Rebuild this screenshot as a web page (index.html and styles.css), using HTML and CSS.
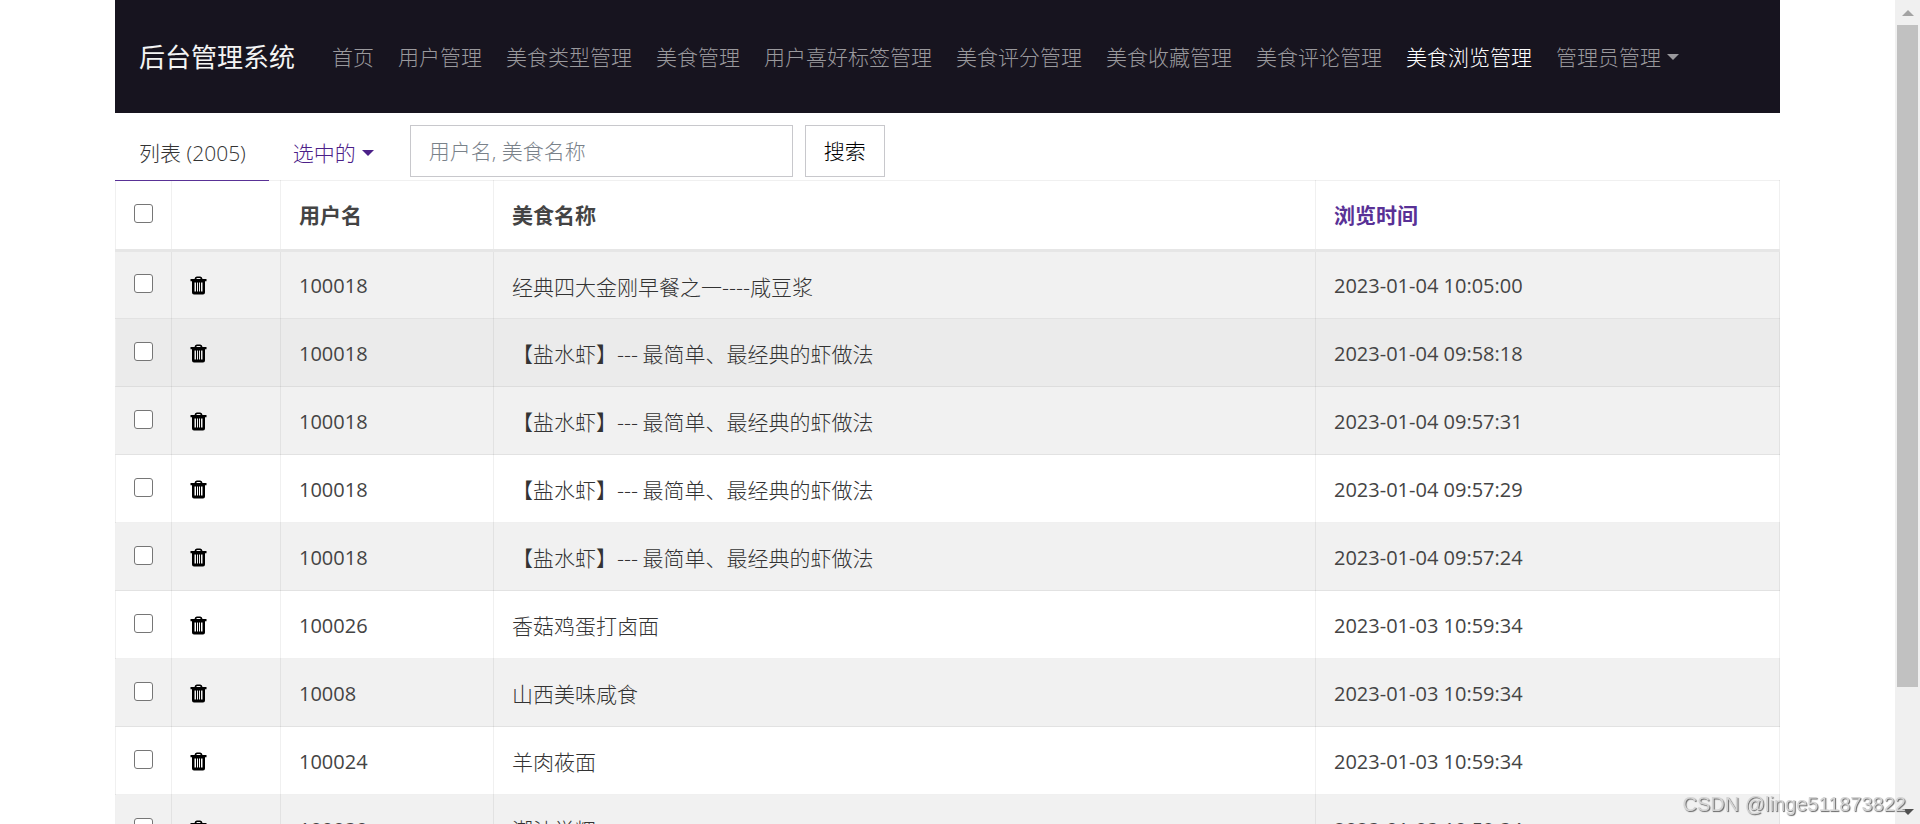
FILE: index.html
```html
<!DOCTYPE html>
<html lang="zh-CN">
<head>
<meta charset="utf-8">
<title>美食浏览管理 - 后台管理系统</title>
<link rel="stylesheet" href="styles.css">
</head>
<body>
<svg class="sprite" aria-hidden="true">
  <symbol id="trash" viewBox="0 0 17 19">
    <path fill-rule="evenodd" d="M4.500 3Q4.800.5 6.800.5H10.200Q12.200.5 12.500 3H16.500V5.200H15V16.500Q15 18.500 13 18.500H4Q2 18.500 2 16.500V5.200H.5V3ZM6.300 3H10.700Q10.500 2 9.800 2H7.200Q6.500 2 6.300 3ZM4.500 6.500V15.500H6V6.500ZM7 6.500V15.500H8V6.500ZM9 6.500V15.500H10V6.500ZM11 6.500V15.500H12.500V6.500Z"/>
  </symbol>
</svg>
<div class="page">
  <nav class="navbar">
    <a class="brand" href="#">后台管理系统</a>
    <a class="nav-link" href="#">首页</a>
    <a class="nav-link" href="#">用户管理</a>
    <a class="nav-link" href="#">美食类型管理</a>
    <a class="nav-link" href="#">美食管理</a>
    <a class="nav-link" href="#">用户喜好标签管理</a>
    <a class="nav-link" href="#">美食评分管理</a>
    <a class="nav-link" href="#">美食收藏管理</a>
    <a class="nav-link" href="#">美食评论管理</a>
    <a class="nav-link active" href="#">美食浏览管理</a>
    <a class="nav-link caret" href="#">管理员管理</a>
  </nav>
  <div class="toolbar">
    <a class="tab current" href="#">列表 (2005)</a>
    <a class="tab caret" href="#">选中的</a>
    <form class="search">
      <input class="search-box" type="text" placeholder="用户名, 美食名称" aria-label="用户名, 美食名称">
      <button class="search-button" type="button">搜索</button>
    </form>
  </div>
  <table class="list">
    <colgroup><col class="col-check"><col class="col-action"><col class="col-user"><col><col class="col-time"></colgroup>
    <thead>
      <tr><th><input class="check" type="checkbox" aria-label="全选"></th><th></th><th>用户名</th><th>美食名称</th><th><a class="sort" href="#">浏览时间</a></th></tr>
    </thead>
    <tbody>
      <tr><td><input class="check" type="checkbox" aria-label="选择"></td><td><a class="delete" href="#" aria-label="删除"><svg class="icon"><use href="#trash"/></svg></a></td><td class="num">100018</td><td class="name">经典四大金刚早餐之一----咸豆浆</td><td class="num">2023-01-04 10:05:00</td></tr>
      <tr class="hover"><td><input class="check" type="checkbox" aria-label="选择"></td><td><a class="delete" href="#" aria-label="删除"><svg class="icon"><use href="#trash"/></svg></a></td><td class="num">100018</td><td class="name">【盐水虾】--- 最简单、最经典的虾做法</td><td class="num">2023-01-04 09:58:18</td></tr>
      <tr><td><input class="check" type="checkbox" aria-label="选择"></td><td><a class="delete" href="#" aria-label="删除"><svg class="icon"><use href="#trash"/></svg></a></td><td class="num">100018</td><td class="name">【盐水虾】--- 最简单、最经典的虾做法</td><td class="num">2023-01-04 09:57:31</td></tr>
      <tr><td><input class="check" type="checkbox" aria-label="选择"></td><td><a class="delete" href="#" aria-label="删除"><svg class="icon"><use href="#trash"/></svg></a></td><td class="num">100018</td><td class="name">【盐水虾】--- 最简单、最经典的虾做法</td><td class="num">2023-01-04 09:57:29</td></tr>
      <tr><td><input class="check" type="checkbox" aria-label="选择"></td><td><a class="delete" href="#" aria-label="删除"><svg class="icon"><use href="#trash"/></svg></a></td><td class="num">100018</td><td class="name">【盐水虾】--- 最简单、最经典的虾做法</td><td class="num">2023-01-04 09:57:24</td></tr>
      <tr><td><input class="check" type="checkbox" aria-label="选择"></td><td><a class="delete" href="#" aria-label="删除"><svg class="icon"><use href="#trash"/></svg></a></td><td class="num">100026</td><td class="name">香菇鸡蛋打卤面</td><td class="num">2023-01-03 10:59:34</td></tr>
      <tr><td><input class="check" type="checkbox" aria-label="选择"></td><td><a class="delete" href="#" aria-label="删除"><svg class="icon"><use href="#trash"/></svg></a></td><td class="num">10008</td><td class="name">山西美味咸食</td><td class="num">2023-01-03 10:59:34</td></tr>
      <tr><td><input class="check" type="checkbox" aria-label="选择"></td><td><a class="delete" href="#" aria-label="删除"><svg class="icon"><use href="#trash"/></svg></a></td><td class="num">100024</td><td class="name">羊肉莜面</td><td class="num">2023-01-03 10:59:34</td></tr>
      <tr><td><input class="check" type="checkbox" aria-label="选择"></td><td><a class="delete" href="#" aria-label="删除"><svg class="icon"><use href="#trash"/></svg></a></td><td class="num">100030</td><td class="name">潮汕鲎粿</td><td class="num">2023-01-03 10:59:34</td></tr>
    </tbody>
  </table>
</div>
<div class="scrollbar" aria-hidden="true">
  <span class="arrow up"></span>
  <span class="track"><span class="thumb"></span></span>
  <span class="arrow down"></span>
</div>
<div class="watermark">CSDN @linge511873822</div>
</body>
</html>
```

FILE: styles.css
```css
* { box-sizing: border-box; }
body {
  margin: 0;
  height: 100vh;
  overflow: hidden;
  display: grid;
  grid-template-columns: minmax(0, 1fr) 25px;
  background: #fff;
  color: #333;
  font: 300 21px/32px "Open Sans", "Noto Sans CJK SC", sans-serif;
}
a { color: #593196; text-decoration: none; }
.sprite { position: absolute; width: 0; height: 0; }
.page { height: 100vh; overflow: hidden; padding: 0 115px; }

.navbar {
  display: flex;
  align-items: center;
  height: 113px;
  padding: 0 24px;
  background: #17141f;
  white-space: nowrap;
}
.brand { margin-right: 25px; color: #f4f4f4; font-size: 26px; font-weight: 400; }
.nav-link { padding: 0 12px; color: #9a999d; }
.nav-link.active { color: #fff; }
.caret::after {
  content: "";
  display: inline-block;
  margin-left: 6px;
  vertical-align: 5px;
  border: 6px solid transparent;
  border-top-color: currentColor;
  border-bottom: 0;
}

.toolbar { position: relative; z-index: 1; display: flex; align-items: flex-end; height: 68px; }
.tab { padding: 12px 24px; height: 56px; color: #4b2088; white-space: nowrap; }
.tab.current { padding-right: 23px; color: #333; border-bottom: 1px solid #593196; }
.search { display: flex; gap: 12px; margin: 0 0 4px 12px; }
.search-box, .search-button {
  height: 52px;
  padding: 0 18px;
  border: 1px solid #c8c8cc;
  border-radius: 0;
  background: #fff;
  font: inherit;
}
.search-box { width: 383px; }
.search-box::placeholder { color: #7a828a; opacity: 1; }
.search-button { color: #000; }

.list {
  width: 100%;
  margin-top: -1px;
  table-layout: fixed;
  border-collapse: collapse;
}
.col-check { width: 56px; }
.col-action { width: 109px; }
.col-user { width: 213px; }
.col-time { width: 464px; }
.list th, .list td {
  height: 68px;
  padding: 0 18px;
  border: 1px solid rgba(0, 0, 0, .06);
  text-align: left;
  white-space: nowrap;
}
.list th { height: 70px; color: #444; font-weight: 700; border-bottom: 3px solid #e6e6e6; }
.list td { padding-top: 1px; }
.list tbody tr:nth-child(odd) { background: #f1f1f1; }
.list tbody tr.hover { background: #ebebeb; }
.list .num { padding-top: 2px; color: #444; font-size: 20px; font-weight: 400; }
.list .name { font-family: "Noto Sans CJK SC", sans-serif; }
.check {
  appearance: none;
  display: block;
  width: 19px;
  height: 19px;
  margin: 0 0 4px;
  border: 1px solid #767676;
  border-radius: 3px;
  background: #fff;
}
.delete, .icon { display: block; width: 17px; height: 19px; }

.scrollbar { display: flex; flex-direction: column; background: #f0f0f0; }
.arrow { display: grid; place-items: center; height: 25px; }
.arrow::before { content: ""; border: 6px solid transparent; }
.up::before { border-bottom-color: #a3a3a3; border-top: 0; }
.down::before { border-top-color: #505050; border-bottom: 0; }
.track { flex: 1; padding: 0 2px; }
.thumb { display: block; height: 85.5%; background: #c1c1c1; }

.watermark {
  position: fixed;
  right: 14px;
  bottom: 4px;
  color: #d4d4d4;
  font: 20px/32px "Liberation Sans", sans-serif;
  text-shadow: 1px 1px 1px #666;
}
```
